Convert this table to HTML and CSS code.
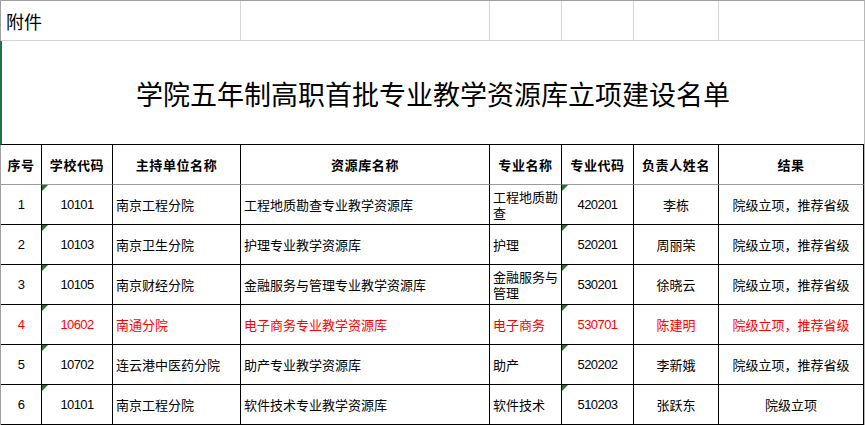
FILE: index.html
```html
<!DOCTYPE html>
<html lang="zh-CN">
<head>
<meta charset="utf-8">
<title>学院五年制高职首批专业教学资源库立项建设名单</title>
<link rel="stylesheet" href="styles.css">
</head>
<body>
<div class="sheet">
  <div class="c attach">附件</div>
  <div class="c blank"></div>
  <div class="c blank"></div>
  <div class="c blank"></div>
  <div class="c blank"></div>
  <div class="c blank last"></div>

  <div class="c title">学院五年制高职首批专业教学资源库立项建设名单</div>

  <div class="c h">序号</div>
  <div class="c h">学校代码</div>
  <div class="c h">主持单位名称</div>
  <div class="c h">资源库名称</div>
  <div class="c h">专业名称</div>
  <div class="c h">专业代码</div>
  <div class="c h">负责人姓名</div>
  <div class="c h">结果</div>

  <div class="c d ctr num">1</div>
  <div class="c d ctr num tri">10101</div>
  <div class="c d lft">南京工程分院</div>
  <div class="c d lft">工程地质勘查专业教学资源库</div>
  <div class="c d lft wrap">工程地质勘查</div>
  <div class="c d ctr num tri">420201</div>
  <div class="c d ctr">李栋</div>
  <div class="c d ctr">院级立项，推荐省级</div>

  <div class="c d ctr num">2</div>
  <div class="c d ctr num tri">10103</div>
  <div class="c d lft">南京卫生分院</div>
  <div class="c d lft">护理专业教学资源库</div>
  <div class="c d lft wrap">护理</div>
  <div class="c d ctr num tri">520201</div>
  <div class="c d ctr">周丽荣</div>
  <div class="c d ctr">院级立项，推荐省级</div>

  <div class="c d ctr num">3</div>
  <div class="c d ctr num tri">10105</div>
  <div class="c d lft">南京财经分院</div>
  <div class="c d lft">金融服务与管理专业教学资源库</div>
  <div class="c d lft wrap">金融服务与管理</div>
  <div class="c d ctr num tri">530201</div>
  <div class="c d ctr">徐晓云</div>
  <div class="c d ctr">院级立项，推荐省级</div>

  <div class="c d ctr num red">4</div>
  <div class="c d ctr num tri red">10602</div>
  <div class="c d lft red">南通分院</div>
  <div class="c d lft red">电子商务专业教学资源库</div>
  <div class="c d lft wrap red">电子商务</div>
  <div class="c d ctr num tri red">530701</div>
  <div class="c d ctr red">陈建明</div>
  <div class="c d ctr red">院级立项，推荐省级</div>

  <div class="c d ctr num">5</div>
  <div class="c d ctr num tri">10702</div>
  <div class="c d lft">连云港中医药分院</div>
  <div class="c d lft">助产专业教学资源库</div>
  <div class="c d lft wrap">助产</div>
  <div class="c d ctr num tri">520202</div>
  <div class="c d ctr">李新娥</div>
  <div class="c d ctr">院级立项，推荐省级</div>

  <div class="c d ctr num">6</div>
  <div class="c d ctr num tri">10101</div>
  <div class="c d lft">南京工程分院</div>
  <div class="c d lft">软件技术专业教学资源库</div>
  <div class="c d lft wrap">软件技术</div>
  <div class="c d ctr num tri">510203</div>
  <div class="c d ctr">张跃东</div>
  <div class="c d ctr">院级立项</div>
</div>
</body>
</html>
```

FILE: styles.css
```css
html, body {
  margin: 0;
  padding: 0;
  background: #ffffff;
}

body {
  width: 865px;
  height: 425px;
  overflow: hidden;
  font-family: "Noto Sans CJK SC", sans-serif;
  color: #000000;
}

.sheet {
  box-sizing: border-box;
  width: 865px;
  height: 425px;
  border-top: 1px solid #a0a0a0;
  border-left: 1px solid #a0a0a0;
  border-right: 1px solid #b8b8b8;
  display: grid;
  grid-template-columns: 41px 71px 128px 249px 72px 72px 85px 145px;
  grid-template-rows: 40px 104px 40px repeat(6, 40px);
}

.c {
  box-sizing: border-box;
  display: flex;
  align-items: center;
  min-width: 0;
}

.attach {
  grid-column: 1 / 4;
  border-right: 1px solid #d4d4d4;
  border-bottom: 1px solid #d4d4d4;
  padding-left: 5px;
  font-size: 18px;
  line-height: 20px;
}

.blank {
  border-right: 1px solid #d4d4d4;
  border-bottom: 1px solid #d4d4d4;
}

.blank.last {
  border-right: none;
}

.title {
  grid-column: 1 / 9;
  margin-left: -1px;
  border-left: 2px solid #217346;
  border-bottom: 1px solid #000000;
  justify-content: center;
  font-size: 27px;
  line-height: 30px;
  padding-top: 2px;
}

.h {
  justify-content: center;
  border-right: 1px solid #000000;
  border-bottom: 1px solid #9c9c9c;
  font-size: 13px;
  font-weight: 700;
  letter-spacing: 0.6px;
  line-height: 16px;
}

.d {
  position: relative;
  border-right: 1px solid #000000;
  border-bottom: 1px solid #000000;
  font-size: 13px;
  line-height: 16px;
}

.ctr {
  justify-content: center;
  text-align: center;
}

.lft {
  justify-content: flex-start;
  text-align: left;
  padding: 0 2px 0 3px;
}

.wrap {
  word-break: break-all;
}

.num {
  font-family: "Liberation Sans", "Noto Sans CJK SC", sans-serif;
  letter-spacing: -0.6px;
}

.red {
  color: #ff0000;
}

.tri::before {
  content: "";
  position: absolute;
  top: 0;
  left: 0;
  width: 0;
  height: 0;
  border-top: 6px solid #1e7b1e;
  border-right: 6px solid transparent;
}
```
